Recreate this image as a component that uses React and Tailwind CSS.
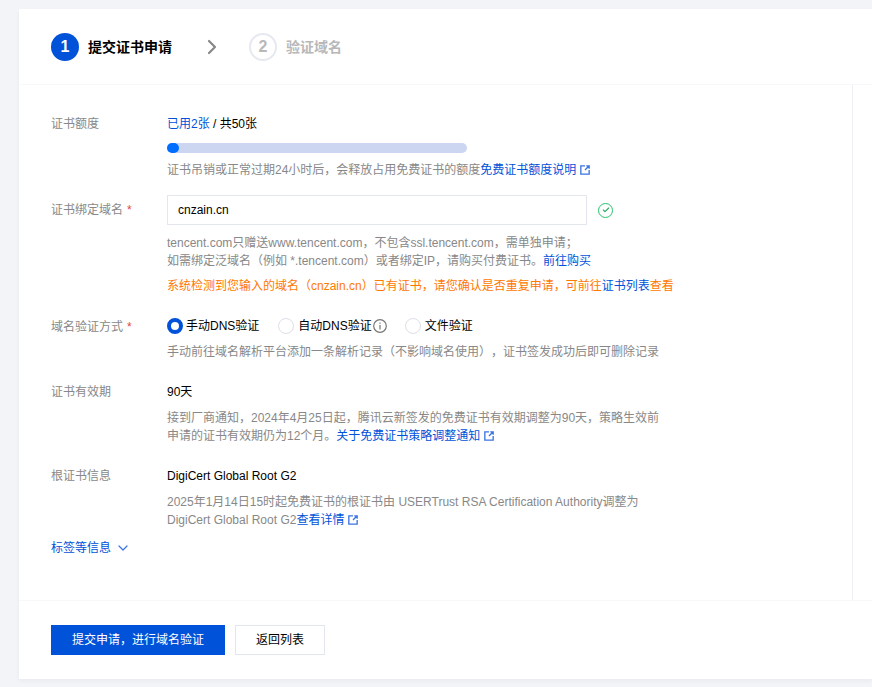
import { Check, ChevronDown, ChevronRight } from 'lucide-react';

const ExternalIcon = () => (
  <svg viewBox="0 0 12 12" className="ml-1 inline-block h-[10px] w-[10px] align-[-1px] text-[#3b74e0]" fill="none" stroke="currentColor" strokeWidth="1.6">
    <path d="M6 1H1v10h10V6" />
    <path d="M6 6 11 1M7.5 1H11v3.5" />
  </svg>
);

const Link = ({ children }) => <span className="text-[#0052d9]">{children}</span>;

const Hint = ({ children, className = '' }) => (
  <p className={`text-xs leading-[18px] text-[#888888] ${className}`}>{children}</p>
);

const Required = () => <span className="ml-1 text-[#e54545]">*</span>;

const Row = ({ label, required, children, className = '', labelClass = 'pt-px' }) => (
  <div className={`flex ${className}`}>
    <div className={`w-[116px] shrink-0 text-xs leading-5 text-[#888888] ${labelClass}`}>
      {label}
      {required && <Required />}
    </div>
    <div className="min-w-0 flex-1">{children}</div>
  </div>
);

const Radio = ({ checked, label, info, className = '' }) => (
  <div className={`flex items-center ${className}`}>
    <span className={`h-4 w-4 rounded-full ${checked ? 'mr-[3px] border-[4px] border-[#0052d9]' : 'mr-1 border border-[#dcdfe8]'}`} />
    <span className="text-xs leading-5 text-black">{label}</span>
    {info && (
      <svg viewBox="0 0 14 14" className="ml-px h-[14px] w-[14px] text-[#777777]" fill="none" stroke="currentColor" strokeWidth="1.2">
        <circle cx="7" cy="7" r="6.3" />
        <path d="M7 6v4.5M7 3.4v1.4" />
      </svg>
    )}
  </div>
);

export default function App() {
  return (
    <div className="h-[687px] overflow-hidden bg-[#f2f4f8] pl-[19px] pt-[9px] font-['Liberation_Sans','Noto_Sans_CJK_SC',sans-serif] [text-spacing-trim:space-all]">
      <div className="flex h-[670px] flex-col bg-white shadow-[0_2px_4px_rgba(54,58,80,0.05)]">
        {/* Steps */}
        <div className="flex h-[76px] items-center border-b border-[#f7f8fa] pl-8">
          <span className="flex h-7 w-7 items-center justify-center rounded-full bg-[#0052d9] text-base font-bold text-white">1</span>
          <span className="ml-[9px] text-sm font-bold text-black">提交证书申请</span>
          <ChevronRight className="ml-[28px] h-6 w-6 text-[#888888]" strokeWidth={2.2} />
          <span className="ml-[25px] flex h-7 w-7 items-center justify-center rounded-full border-2 border-[#e6e9f0] text-base font-bold text-[#b8b8b8]">2</span>
          <span className="ml-[9px] text-sm font-bold text-[#b8b8b8]">验证域名</span>
        </div>

        {/* Form */}
        <div className="flex-1 pr-[19px]">
          <div className="h-full border-r border-[#eef0f5] pl-8 pt-[28px]">
            <Row label="证书额度">
              <p className="pt-px text-xs leading-5 text-black">
                <Link>已用2张</Link> / 共50张
              </p>
              <div className="mt-[9px] h-[10px] w-[300px] rounded-full bg-[#cdd6f0]">
                <div className="h-[10px] w-3 rounded-full bg-[#006eff]" />
              </div>
              <Hint className="mt-[8px]">
                证书吊销或正常过期24小时后，会释放占用免费证书的额度<Link>免费证书额度说明</Link>
                <ExternalIcon />
              </Hint>
            </Row>

            <Row label="证书绑定域名" required labelClass="pt-[5px]" className="mt-[16px]">
              <div className="flex items-center">
                <div className="flex h-[30px] w-[420px] items-center border border-[#e3e6ed] px-[10px] text-xs text-black">cnzain.cn</div>
                <span className="ml-[11px] flex h-[15px] w-[15px] items-center justify-center rounded-full border-[1.5px] border-[#29c26f] text-[#29a863]">
                  <Check className="h-[8px] w-[8px]" strokeWidth={3.5} />
                </span>
              </div>
              <Hint className="mt-[9px]">
                tencent.com只赠送www.tencent.com，不包含ssl.tencent.com，需单独申请；
                <br />
                如需绑定泛域名（例如 *.tencent.com）或者绑定IP，请购买付费证书。<Link>前往购买</Link>
              </Hint>
              <p className="mt-[7px] text-xs leading-[18px] text-[#ff7800]">
                系统检测到您输入的域名（cnzain.cn）已有证书，请您确认是否重复申请，可前往<Link>证书列表</Link>查看
              </p>
            </Row>

            <Row label="域名验证方式" required className="mt-[21px]">
              <div className="flex">
                <Radio checked label="手动DNS验证" />
                <Radio label="自动DNS验证" info className="ml-[19px]" />
                <Radio label="文件验证" className="ml-[18px]" />
              </div>
              <Hint className="mt-[7px]">手动前往域名解析平台添加一条解析记录（不影响域名使用），证书签发成功后即可删除记录</Hint>
            </Row>

            <Row label="证书有效期" labelClass="" className="mt-[21px]">
              <p className="text-xs leading-5 text-black">90天</p>
              <Hint className="mt-[7px]">
                接到厂商通知，2024年4月25日起，腾讯云新签发的免费证书有效期调整为90天，策略生效前
                <br />
                申请的证书有效期仍为12个月。<Link>关于免费证书策略调整通知</Link>
                <ExternalIcon />
              </Hint>
            </Row>

            <Row label="根证书信息" labelClass="" className="mt-[21px]">
              <p className="text-xs leading-5 text-black">DigiCert Global Root G2</p>
              <Hint className="mt-[7px]">
                2025年1月14日15时起免费证书的根证书由 USERTrust RSA Certification Authority调整为
                <br />
                DigiCert Global Root G2<Link>查看详情</Link>
                <ExternalIcon />
              </Hint>
            </Row>

            <div className="mt-[9px] flex items-center text-xs leading-5 text-[#0052d9]">
              标签等信息
              <ChevronDown className="ml-[4px] h-4 w-4 text-[#3b74e0]" strokeWidth={1.8} />
            </div>
          </div>
        </div>

        {/* Footer */}
        <div className="flex h-[79px] items-start border-t border-[#f7f8fa] pl-8 pt-6">
          <button className="h-[30px] w-[174px] bg-[#0052d9] text-xs text-white">提交申请，进行域名验证</button>
          <button className="ml-[10px] h-[30px] w-[90px] border border-[#e3e6ed] text-xs text-black">返回列表</button>
        </div>
      </div>
    </div>
  );
}
